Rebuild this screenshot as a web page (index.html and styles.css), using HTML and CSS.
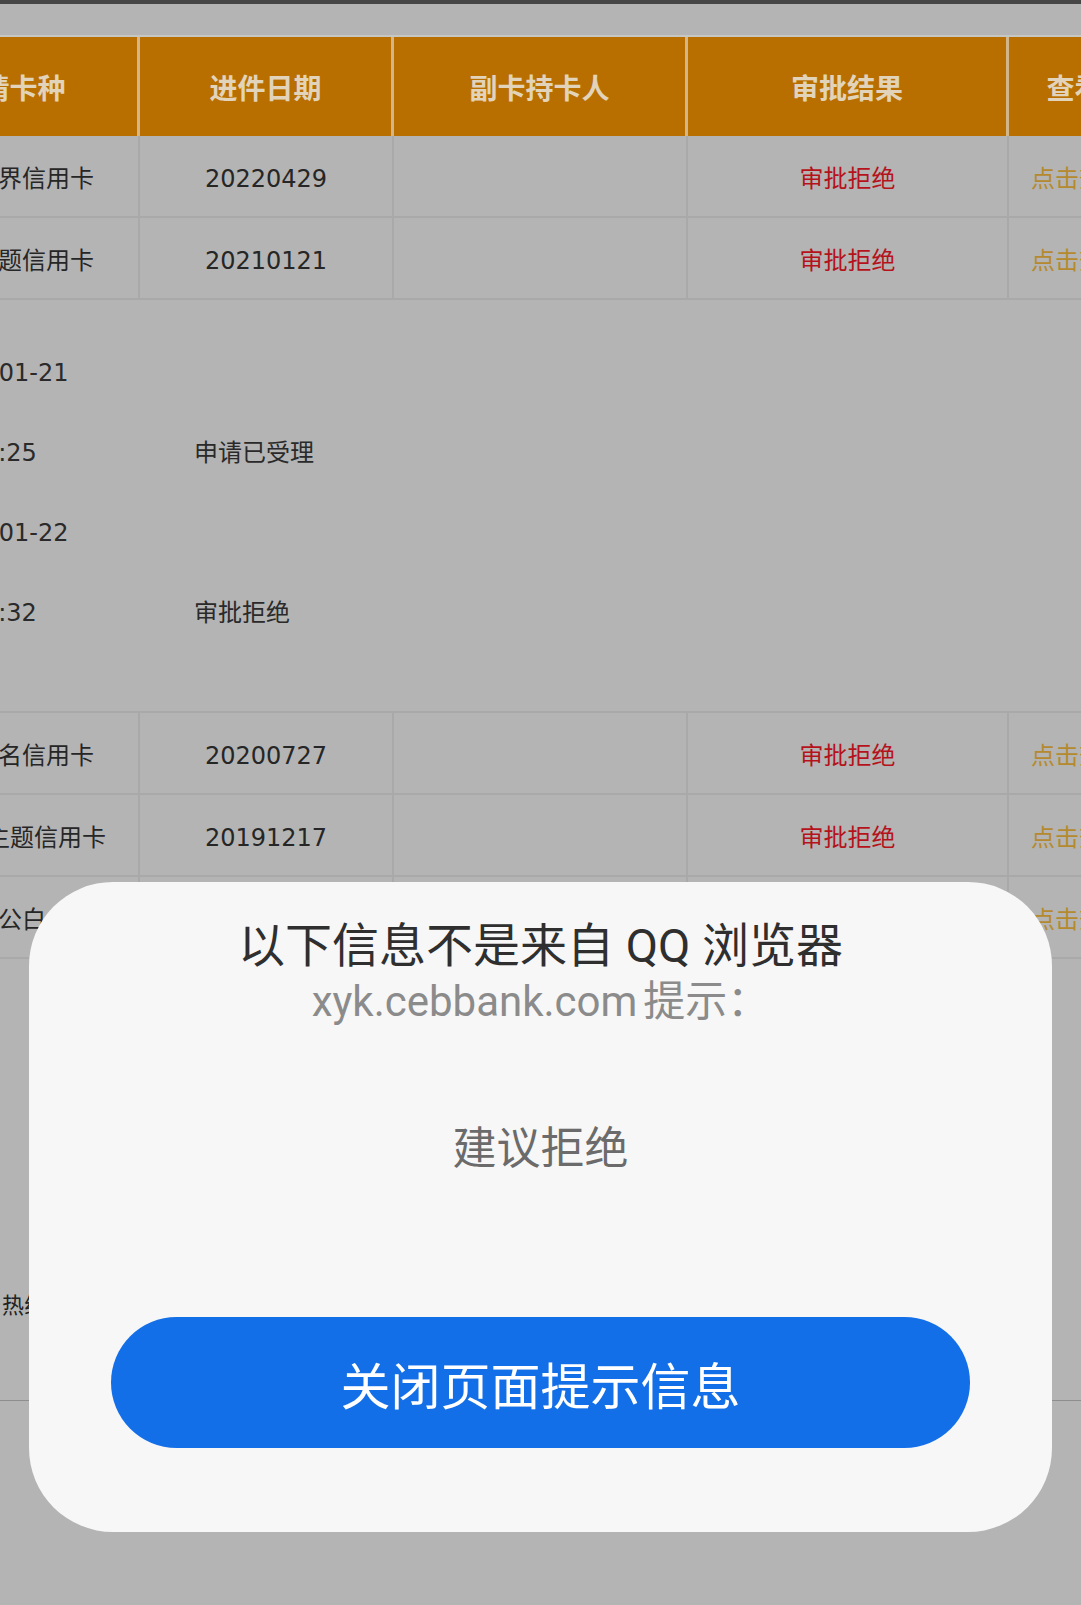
FILE: index.html
```html
<!DOCTYPE html>
<html lang="zh-CN">
<head>
<meta charset="utf-8">
<title>申请进度查询</title>
<link rel="stylesheet" href="styles.css">
</head>
<body>
<div class="statusbar"></div>
<main class="scroller">
  <div class="page">
    <div class="row head">
      <div class="cell">申请卡种</div>
      <div class="cell">进件日期</div>
      <div class="cell">副卡持卡人</div>
      <div class="cell">审批结果</div>
      <div class="cell">查看详情</div>
    </div>
    <div class="row">
      <div class="cell">光大世界信用卡</div>
      <div class="cell num">20220429</div>
      <div class="cell"></div>
      <div class="cell reject">审批拒绝</div>
      <div class="cell link">点击查看详情</div>
    </div>
    <div class="row">
      <div class="cell">光大主题信用卡</div>
      <div class="cell num">20210121</div>
      <div class="cell"></div>
      <div class="cell reject">审批拒绝</div>
      <div class="cell link">点击查看详情</div>
    </div>
    <div class="detail">
      <div class="log">
        <span>2021-01-21</span><span></span>
        <span>16:39:25</span><span>申请已受理</span>
        <span>2021-01-22</span><span></span>
        <span>09:12:32</span><span>审批拒绝</span>
      </div>
    </div>
    <div class="row">
      <div class="cell">光大联名信用卡</div>
      <div class="cell num">20200727</div>
      <div class="cell"></div>
      <div class="cell reject">审批拒绝</div>
      <div class="cell link">点击查看详情</div>
    </div>
    <div class="row">
      <div class="cell">光大悦主题信用卡</div>
      <div class="cell num">20191217</div>
      <div class="cell"></div>
      <div class="cell reject">审批拒绝</div>
      <div class="cell link">点击查看详情</div>
    </div>
    <div class="row">
      <div class="cell">光大银联公白金主卡</div>
      <div class="cell num">20190305</div>
      <div class="cell"></div>
      <div class="cell reject">审批拒绝</div>
      <div class="cell link">点击查看详情</div>
    </div>
    <div class="footer">
      <p class="hotline">热线电话：95595</p>
    </div>
  </div>
</main>

<div class="overlay">
  <div class="dialog" role="dialog">
    <h2 class="dlg-title">以下信息不是来自 QQ 浏览器</h2>
    <p class="dlg-source">xyk.cebbank.com<span class="gap"></span>提示：</p>
    <p class="dlg-msg">建议拒绝</p>
    <button class="dlg-btn">关闭页面提示信息</button>
  </div>
</div>
</body>
</html>
```

FILE: styles.css
```css
* {
  box-sizing: border-box;
  margin: 0;
  padding: 0;
}

html, body {
  width: 1081px;
  height: 1605px;
  overflow: hidden;
}

body {
  background: #b4b4b4;
  font-family: "DejaVu Sans", "Noto Sans CJK SC", sans-serif;
  color: #262626;
}

.statusbar {
  height: 4px;
  background: #464646;
}

.scroller {
  width: 1081px;
  overflow: hidden;
  padding-top: 31px;
}

.page {
  margin-left: -118px;
  width: 1360px;
}

.row {
  display: grid;
  grid-template-columns: 258px 254px 294px 321px 190px;
  height: 82px;
  border-bottom: 2px solid #a9a9a9;
}

.cell {
  display: flex;
  align-items: center;
  justify-content: center;
  border-right: 2px solid #a9a9a9;
  font-size: 24px;
  white-space: nowrap;
  overflow: hidden;
}

.cell.num {
  padding-top: 6px;
}

.row.head {
  height: 101px;
  border-top: 2px solid #c6c6c3;
  border-bottom: none;
  background: #b86f00;
}

.row.head .cell {
  border-right: 3px solid #d3b58a;
  font-size: 28px;
  font-weight: bold;
  color: #e2d3bb;
  font-family: "Noto Sans CJK SC", sans-serif;
}

.reject {
  color: #b5121b;
  font-family: "Noto Sans CJK SC", sans-serif;
}

.link {
  color: #b58a2e;
  font-family: "Noto Sans CJK SC", sans-serif;
}

.detail {
  height: 413px;
  border-bottom: 2px solid #a9a9a9;
  padding: 33px 0 0 47px;
}

.log {
  display: grid;
  grid-template-columns: 265px auto;
  grid-auto-rows: 80px;
  line-height: 80px;
  font-size: 24px;
  color: #2a2a2a;
  white-space: nowrap;
}

.footer {
  padding-top: 329px;
  border-bottom: 1px solid #8e8e8e;
}

.hotline {
  margin-left: 120px;
  font-size: 22px;
  line-height: 30px;
  color: #222;
  font-family: "Noto Sans CJK SC", sans-serif;
  margin-bottom: 82px;
}

.overlay {
  position: fixed;
  inset: 0;
  display: flex;
  justify-content: center;
  align-items: flex-start;
  padding-top: 882px;
}

.dialog {
  width: 1023px;
  height: 650px;
  background: #f7f7f7;
  border-radius: 84px;
  display: flex;
  flex-direction: column;
  align-items: center;
  padding-top: 36px;
  font-family: Roboto, "Noto Sans CJK SC", sans-serif;
}

.dlg-title {
  font-size: 47px;
  font-weight: normal;
  line-height: 56px;
  color: #2f2f2f;
  white-space: nowrap;
}

.dlg-source {
  font-size: 42px;
  line-height: 56px;
  color: #8b8b8b;
  white-space: nowrap;
}

.gap {
  display: inline-block;
  width: 6px;
}

.dlg-msg {
  margin-top: 93px;
  font-size: 44px;
  line-height: 52px;
  color: #6b6b6b;
}

.dlg-btn {
  margin-top: 142px;
  width: 859px;
  height: 131px;
  border: none;
  border-radius: 66px;
  background: #136fe8;
  color: #ffffff;
  font-family: Roboto, "Noto Sans CJK SC", sans-serif;
  font-size: 50px;
}
```
